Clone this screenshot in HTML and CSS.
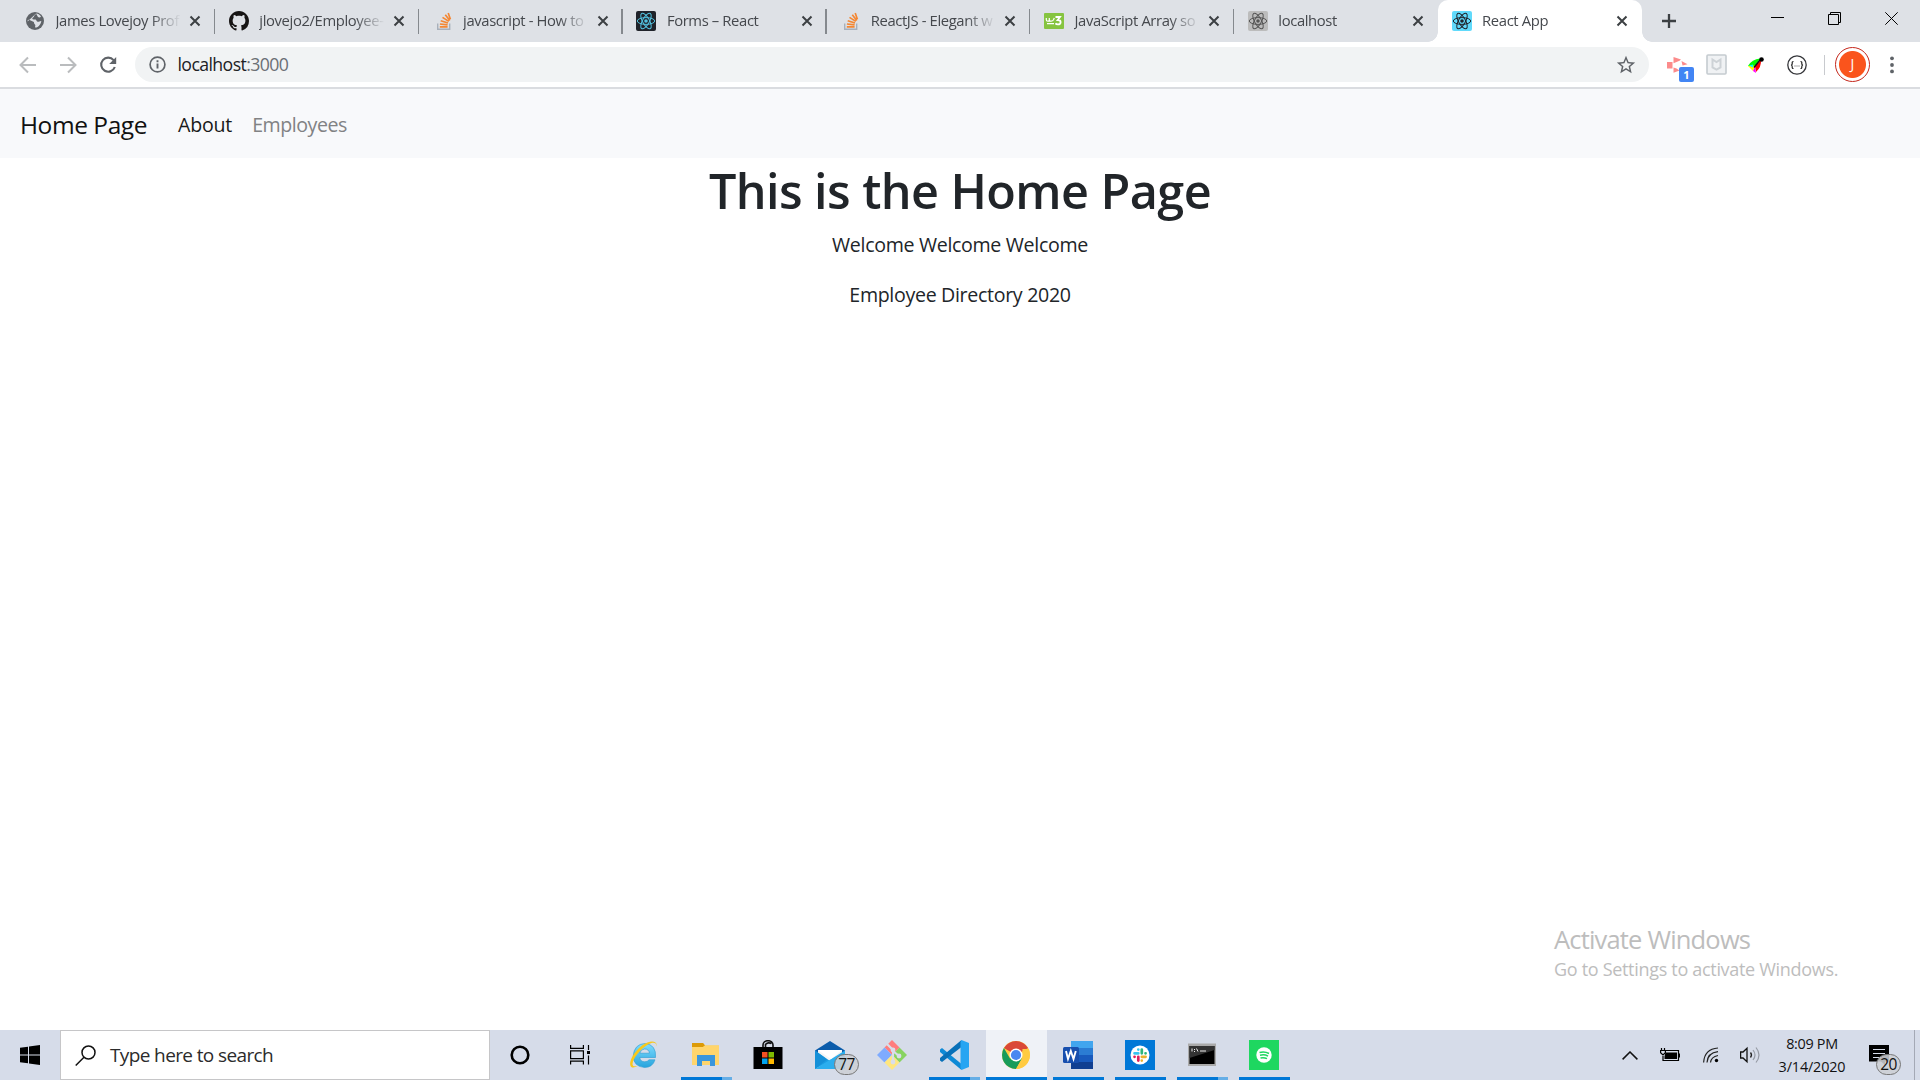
FILE: index.html
```html
<!DOCTYPE html>
<html lang="en">
<head>
<meta charset="utf-8">
<title>React App</title>
<link rel="stylesheet" href="styles.css">
</head>
<body>
<svg class="sprite" aria-hidden="true">
  <symbol id="react" viewBox="0 0 20 20"><circle cx="10" cy="10" r="1.8" fill="currentColor"/><g fill="none" stroke="currentColor" stroke-width="1"><ellipse cx="10" cy="10" rx="8.7" ry="3.4"/><ellipse cx="10" cy="10" rx="8.7" ry="3.4" transform="rotate(60 10 10)"/><ellipse cx="10" cy="10" rx="8.7" ry="3.4" transform="rotate(120 10 10)"/></g></symbol>
  <symbol id="stack" viewBox="0 0 20 20"><path d="M4.700 12.500v5.800h12v-5.800" fill="none" stroke="#a8b0bb" stroke-width="1.400"/><g stroke="#f48733" stroke-width="1.700"><path d="M6.800 15.900h7.800M6.900 13l7.700.9M7.700 9.700l7.300 2.300M9.500 6.400l6.300 4M12.300 3.700l4.500 5.900M15.200 2l2.200 6.200"/></g></symbol>
  <symbol id="x" viewBox="0 0 12 12"><path d="M1.500 1.500l9 9M10.500 1.500l-9 9" stroke="#3c4043" stroke-width="2" fill="none"/></symbol>
</svg>
<header class="tabs">
  <div class="tab"><svg class="fav" viewBox="0 0 20 20"><circle cx="10" cy="10" r="9" fill="#5f6368"/><path d="M11 2.600c-.2 1.800-2 1.500-2 3 0 1-1.800 1-1.700 2.200.1 1 2.500.4 3.300.8 1.200.7.600 2 2 2.200 1.500.2 2.200-1 3.700-.8-.3 3-2.600 6.400-6 6.600-.8-.6.7-2.200-.3-3.200-.9-.8-1-1.600-1.100-2.500L4 8.800C2.700 8.600 2.500 9.500 2.600 10.500M11 2.600c2.500.2 4 1.500 5 3-1 1.500-2.500.8-3 .5z" fill="#dee1e6"/></svg><span class="title">James Lovejoy Prof</span><svg class="close"><use href="#x"/></svg></div>
  <div class="tab"><svg class="fav" viewBox="0 0 16 16"><path fill="#171515" d="M8 0C3.580 0 0 3.580 0 8c0 3.540 2.290 6.530 5.470 7.590.4.070.55-.17.55-.38 0-.19-.01-.82-.01-1.490-2.010.37-2.530-.49-2.690-.94-.09-.23-.48-.94-.82-1.130-.28-.15-.68-.52-.01-.53.63-.01 1.080.58 1.230.82.72 1.210 1.870.87 2.330.66.070-.52.28-.87.51-1.070-1.780-.2-3.640-.89-3.640-3.950 0-.87.31-1.590.82-2.150-.08-.2-.36-1.020.08-2.120 0 0 .67-.21 2.200.82.64-.18 1.320-.27 2-.27s1.360.09 2 .27c1.530-1.040 2.200-.82 2.200-.82.44 1.100.16 1.920.08 2.120.51.56.82 1.270.82 2.150 0 3.070-1.870 3.750-3.650 3.950.29.25.54.73.54 1.480 0 1.070-.01 1.930-.01 2.200 0 .21.15.46.55.38A8.010 8.010 0 0 0 16 8c0-4.420-3.580-8-8-8z"/></svg><span class="title">jlovejo2/Employee-</span><svg class="close"><use href="#x"/></svg></div>
  <div class="tab"><svg class="fav"><use href="#stack"/></svg><span class="title">javascript - How to</span><svg class="close"><use href="#x"/></svg></div>
  <div class="tab"><svg class="fav dark"><use href="#react"/></svg><span class="title">Forms – React</span><svg class="close"><use href="#x"/></svg></div>
  <div class="tab"><svg class="fav"><use href="#stack"/></svg><span class="title">ReactJS - Elegant w</span><svg class="close"><use href="#x"/></svg></div>
  <div class="tab"><svg class="fav" viewBox="0 0 20 20"><rect y="2" width="20" height="16" rx="1" fill="#86c440"/><path d="M2.300 7v1.700q0 1.500 1.500 1.500t1.500-1.500V7M5.300 8.700q0 1.500 1.700 1.500t2.500-1.500l.8-1.700M3 12.700h7" fill="none" stroke="#fff" stroke-width="1.200"/><path d="M11.500 6h4.500l-2.300 3q2.900 0 2.900 2.200t-2.700 2.200q-1.600 0-2.500-1" fill="none" stroke="#fff" stroke-width="1.800"/></svg><span class="title">JavaScript Array so</span><svg class="close"><use href="#x"/></svg></div>
  <div class="tab"><svg class="fav gray"><use href="#react"/></svg><span class="title">localhost</span><svg class="close"><use href="#x"/></svg></div>
  <div class="tab active"><svg class="fav cyan"><use href="#react"/></svg><span class="title">React App</span><svg class="close"><use href="#x"/></svg></div>
  <svg class="plus" viewBox="0 0 14 14"><path d="M7 0v14M0 7h14" stroke="#3c4043" stroke-width="2.300"/></svg>
  <div class="winctl">
    <svg viewBox="0 0 13 13"><path d="M0 5.500h13" stroke="#000"/></svg>
    <svg viewBox="0 0 13 13"><path d="M.5 2.500h10v10h-10zM2.500 2.500v-2h10v10h-2" fill="none" stroke="#000"/></svg>
    <svg viewBox="0 0 13 13"><path d="M.3.3l12.400 12.400M12.700.3L.3 12.700" stroke="#000"/></svg>
  </div>
</header>
<div class="toolbar">
  <svg class="nav-ic" viewBox="0 0 18 18"><path d="M17 9H2M9 1.500L1.500 9 9 16.500" fill="none" stroke="#babcbe" stroke-width="2"/></svg>
  <svg class="nav-ic" viewBox="0 0 18 18"><path d="M1 9h15M9 1.500L16.500 9 9 16.500" fill="none" stroke="#babcbe" stroke-width="2"/></svg>
  <svg class="nav-ic" viewBox="0 0 18 18"><path d="M14.600 4.200A7 7 0 1 0 15.800 11" fill="none" stroke="#5f6368" stroke-width="2.100"/><path d="M17.200 1v7h-7z" fill="#5f6368"/></svg>
  <div class="omnibox">
    <svg class="info" viewBox="0 0 17 17"><circle cx="8.500" cy="8.500" r="7.400" fill="none" stroke="#5f6368" stroke-width="1.700"/><path d="M8.500 7.500v5M8.500 4.300v1.900" stroke="#5f6368" stroke-width="1.900"/></svg>
    <span class="url">localhost<span class="port">:3000</span></span>
    <svg class="star" viewBox="0 0 24 24"><path fill="#5f6368" d="M22 9.240l-7.190-.62L12 2 9.190 8.630 2 9.240l5.460 4.730L5.820 21 12 17.270 18.180 21l-1.630-7.030L22 9.240zM12 15.400l-3.760 2.270 1-4.280-3.320-2.880 4.380-.38L12 6.100l1.710 4.040 4.380.38-3.320 2.880 1 4.280L12 15.400z"/></svg>
  </div>
  <div class="ext">
    <div class="ext-shot"><svg viewBox="0 0 21 16"><path d="M0 5h5.500v6.500H0zM6.500 0l7.500 2.500-1.500 1.300-6 2.400zM14.500 4l6 3.200-5 1.300zM6.500 10.500l3 1 3 2-6 2.300zM12 12l4-1.500-2 4z" fill="#fc8b8b"/></svg><span class="count">1</span></div>
    <svg class="i21" viewBox="0 0 21 21"><rect x="1" y="1" width="19" height="19" rx="1" fill="#f0f2f4" stroke="#c5cbd0" stroke-width="1.600"/><path d="M6.500 5.500v8l4 2.200 4-2.200v-8l-4 2.500z" fill="none" stroke="#cdd2d6" stroke-width="2"/></svg>
    <svg class="i16" viewBox="0 0 16 16"><path d="M12 1.500Q4 2 0 9l7 1z" fill="#0f0"/><path d="M0 9l7-.5L5 14z" fill="#ff0"/><path d="M1 8.500l4-1v3z" fill="#0ff"/><path d="M13 3q.5 7-5 12l-1-5.500z" fill="#f00"/><path d="M7 9.500L5 14l3 2z" fill="#f0f"/><path d="M6 10.500l6-7.500" stroke="#111" stroke-width="1.500"/><circle cx="13.500" cy="2.500" r="2.300" fill="#000"/></svg>
    <svg class="i20" viewBox="0 0 20 20"><circle cx="10" cy="10" r="9.200" fill="none" stroke="#35363a" stroke-width="1.300"/><path d="M6.500 6.500q-1.500 0-1.300 1.700T4 10q1.400.2 1.200 1.800t1.300 1.700M13.500 6.500q1.500 0 1.300 1.700T16 10q-1.400.2-1.200 1.800t-1.300 1.700" fill="none" stroke="#222" stroke-width="1.200"/><path d="M7.500 11h1M9.500 11h1M11.500 11h1" stroke="#555"/></svg>
  </div>
  <div class="divider"></div>
  <div class="avatar">J</div>
  <svg class="menu" viewBox="0 0 4 18"><circle cx="2" cy="2.300" r="1.900" fill="#5f6368"/><circle cx="2" cy="9" r="1.900" fill="#5f6368"/><circle cx="2" cy="15.400" r="1.900" fill="#5f6368"/></svg>
</div>
<main class="page">
  <nav class="navbar"><a class="brand">Home Page</a><a class="link on">About</a><a class="link off">Employees</a></nav>
  <h1>This is the Home Page</h1>
  <p>Welcome Welcome Welcome</p>
  <p>Employee Directory 2020</p>
  <aside class="activate"><div class="act-title">Activate Windows</div><div class="act-sub">Go to Settings to activate Windows.</div></aside>
</main>
<footer class="taskbar">
  <div class="start"><svg viewBox="0 0 20 20"><path d="M0 2.800l8-1.100v7.800H0zM9 1.500L20 0v9.500H9zM0 10.500h8v7.800l-8-1.100zM9 10.500h11V20L9 18.500z"/></svg></div>
  <div class="search"><svg viewBox="0 0 21 21"><circle cx="13.500" cy="7.500" r="6.500" fill="none" stroke="#111" stroke-width="1.500"/><path d="M9 12.200L.7 20.500" stroke="#111" stroke-width="1.500"/></svg><span>Type here to search</span></div>
  <div class="sys"><svg viewBox="0 0 20 20"><circle cx="10" cy="10" r="8.300" fill="none" stroke="#000" stroke-width="2.600"/></svg></div>
  <div class="sys"><svg viewBox="0 0 20 20"><path d="M.6 0v3.400h12.800V0M.6 19.500v-3.400h12.800v3.400M.6 5.900h12.800v7.700H.6zM18.500 0v5M18.500 10.500v9" fill="none" stroke="#000" stroke-width="1.200"/><path d="M17 6h3v3h-3z"/></svg></div>
  <div class="apps">
    <div class="app"><svg viewBox="0 0 30 30"><defs><linearGradient id="ie" x2="0" y2="1"><stop stop-color="#7fdcff"/><stop offset="1" stop-color="#27a4dd"/></linearGradient></defs><path d="M26.500 17.500H10.700q.8 4.300 5 4.300 3 0 4.300-2h6q-2.300 7.700-10.500 7.700-11-.8-11.300-11.500Q5.200 4 16 3.500q11.500 1 10.500 14zM10.800 13.200h9.700q-.7-4.200-4.800-4.200-4 .1-4.900 4.200z" fill="url(#ie)" stroke="#2c9bd0" stroke-width=".6"/><path d="M27.500 6.500C29 .5 21-.3 13 5.500 4 12.500-.5 22.500 1.700 26.200c1.300 2 4.300 1.300 7-.5-3 1.200-5.200.8-5.200-1.700C4 18.500 11 9 19 4.500c5-2.800 8.800-2.500 8.500 2z" fill="#f8c81c"/></svg></div>
    <div class="app run more"><svg viewBox="0 0 30 30"><path d="M1 3h11l2 2.500h14V25H1z" fill="#fcc94d"/><path d="M1 3h11l2 2.500L12 7H1z" fill="#dc9a07"/><path d="M1 7h11l2-1.500h14V25H1z" fill="#ffd56c"/><path d="M6 15h18v11h-5v-5h-8v5H6z" fill="#3a96dc"/></svg></div>
    <div class="app"><svg viewBox="0 0 30 30"><path d="M10 8V5a5 4.300 0 0 1 10 0v3M12.500 8V4.500a4 3.500 0 0 1 6-.8" fill="none" stroke="#111" stroke-width="1.600"/><path d="M.5 7h29v22H.5z"/><path d="M9 12h5.500v5.500H9z" fill="#f25022"/><path d="M15.500 12H21v5.500h-5.500z" fill="#7fba00"/><path d="M9 18.500h5.500V24H9z" fill="#00a4ef"/><path d="M15.500 18.500H21V24h-5.500z" fill="#ffb900"/></svg></div>
    <div class="app"><svg viewBox="0 0 30 30"><path d="M0 10.500L15 1l15 9.500V20H0z" fill="#0b5cab"/><path d="M3 10h24v11H3z" fill="#f5f5f5"/><path d="M0 10.500L15 21 0 29z" fill="#1b9de2"/><path d="M30 10.500V29H0z" fill="#2baeee"/><path d="M0 10.500L12 19.500 0 29z" fill="#1590d8"/><path d="M3 10h24l-11 9z" fill="#fff"/></svg><span class="badge mail-n">77</span></div>
    <div class="app"><svg viewBox="0 0 30 30"><path d="M15 0l7.500 7.500L15 15 7.500 7.500z" fill="#ff7d7d"/><path d="M22.500 7.500L30 15l-7.500 7.500L15 15z" fill="#87d360"/><path d="M7.500 7.500L15 15l-7.500 7.500L0 15z" fill="#7fabff"/><path d="M15 15l7.500 7.500L15 30l-7.500-7.500z" fill="#ffe680"/><path d="M10 4l6 6v12M16 11l6 5" stroke="#d9deea" stroke-width="2.200" fill="none"/><g fill="#d9deea"><circle cx="16" cy="10" r="2.400"/><circle cx="22" cy="16" r="2.400"/><circle cx="16" cy="22" r="2.400"/></g></svg></div>
    <div class="app run more"><svg viewBox="0 0 30 30"><path d="M1 9.500L3 8l19.500 16v6L1 12z" fill="#0e8ad6"/><path d="M1 20.500L3 22 22.500 7V0L1 18z" fill="#0870b8"/><path d="M22.500 0L30 3v24l-7.500 3-1-2.500V2z" fill="#27a5f2"/></svg></div>
    <div class="app run now"><svg viewBox="0 0 28 28"><circle cx="14" cy="14" r="14" fill="#ffcb42"/><path d="M14 14L1.900 7A14 14 0 0 1 26.100 7z" fill="#da4837"/><path d="M1.900 7A14 14 0 0 0 14 28l6-10.500L8 17.500z" fill="#179c5a"/><path d="M14 28l6-10.500L20.500 8h6A14 14 0 0 1 14 28z" fill="#ffcb42"/><circle cx="14" cy="14" r="6.500" fill="#fff"/><circle cx="14" cy="14" r="5.100" fill="#4a88f0"/></svg></div>
    <div class="app run"><svg viewBox="0 0 30 30"><path d="M8 1h22v7H8z" fill="#41a5ee"/><path d="M8 8h22v7H8z" fill="#2b7cd3"/><path d="M8 15h22v7H8z" fill="#185abd"/><path d="M8 22h22v7H8z" fill="#103f91"/><rect x="0" y="7" width="16" height="16" rx="1.500" fill="#174fae"/><path d="M3 11l2 8 2.800-8 2.700 8 2.300-8" fill="none" stroke="#fff" stroke-width="1.900"/></svg></div>
    <div class="app run"><svg viewBox="0 0 30 30"><path d="M0 0h30v30H0z" fill="#0078d7"/><circle cx="15" cy="15" r="9.500" fill="#fff"/><g stroke-width="2.700" stroke-linecap="round"><path d="M9.500 13.300h3.800M13.300 9.500v.1" stroke="#36c5f0"/><path d="M16.800 9.500v3.800M20.500 13.300h.1" stroke="#2eb67d"/><path d="M16.800 16.800h3.800M16.800 20.500v.1" stroke="#ecb22e"/><path d="M13.300 16.800v3.800M9.500 16.800h.1" stroke="#e01e5a"/></g></svg></div>
    <div class="app run more"><svg viewBox="0 0 30 30"><rect x="1" y="3.500" width="28" height="22.500" fill="#aaa"/><path d="M2.500 6h25v18h-25z"/><path d="M2.500 6h25v4L2.500 18z" fill="#333"/><path d="M5 8.500v3M7.500 9v1M7.500 11v1M9.500 8.500l1.500 3M13 11h6" stroke="#eee"/></svg></div>
    <div class="app run"><svg viewBox="0 0 30 30"><path d="M0 0h30v30H0z" fill="#1ed760"/><circle cx="15" cy="15" r="7.700" fill="#fff"/><path d="M10.500 12.500q5-1.500 9.500 1M11 15.300q4.500-1.200 8 .9M11.500 18q3.500-.9 6.500.7" fill="none" stroke="#1ed760" stroke-width="1.500"/></svg></div>
  </div>
  <div class="tray">
    <svg class="chev" viewBox="0 0 16 9"><path d="M.6 8.400L8 1l7.400 7.400" fill="none" stroke="#111" stroke-width="1.500"/></svg>
    <svg class="batt" viewBox="0 0 20 15"><path d="M6 2.500h12.500v10H3V8" fill="none" stroke="#000" stroke-width="1.200"/><path d="M5.500 4.500H17v6.500H4.500V8.500zM19 5.500h1v4h-1z"/><path d="M1.500 0v2M4.500 0v2M.6 2.500h4.800v2.300L3 7 .6 4.800z" fill="none" stroke="#000" stroke-width="1.200"/></svg>
    <svg class="wifi" viewBox="0 0 16 16"><g fill="none" stroke="#222" stroke-width="1.200"><path d="M.6 15.500Q1.500 2 15 1M4 15.500Q4.500 6 15 4.700M7.500 15.500Q8 10 15 8.500"/></g><circle cx="13.500" cy="13.500" r="1.700"/></svg>
    <svg class="vol" viewBox="0 0 20 18"><path d="M.6 6H3l4-3.800v13.600L3 12H.6z" fill="none" stroke="#111" stroke-width="1.300"/><path d="M10.500 6.500q2 2.500 0 5" fill="none" stroke="#222" stroke-width="1.300"/><path d="M13 4q4 5 0 10M16 1.500q6 7.500 0 15" fill="none" stroke="#969ba5" stroke-width="1.200"/></svg>
    <div class="clock"><span class="time">8:09 PM</span><span class="date">3/14/2020</span></div>
    <div class="note"><svg viewBox="0 0 20 20"><path d="M0 0h20v16.500h-4V20l-4-3.500H0z"/><path d="M4 4.500h12M4 8.500h12M4 12.500h8" stroke="#d6dce9" stroke-width="1.200"/></svg><span class="badge note-n">20</span></div>
    <div class="peek"></div>
  </div>
</footer>
</body>
</html>
```
FILE: styles.css
```css
* { box-sizing: border-box; }
body { margin: 0; width: 1920px; height: 1080px; overflow: hidden; display: flex; flex-direction: column; background: #fff; font-family: "Open Sans", "Noto Sans", sans-serif; color: #212529; }
svg { display: block; flex: none; }
.sprite { position: absolute; width: 0; height: 0; }

/* Tab strip */
.tabs { height: 42px; flex: none; display: flex; background: #dee1e6; padding-left: 11px; }
.tab { width: 203.8px; height: 42px; flex: none; display: flex; align-items: center; padding: 0 13.500px 0 14px; position: relative; }
.tab::after { content: ""; position: absolute; right: -0.5px; top: 9px; width: 1.500px; height: 25px; background: #85898e; }
.tab:nth-child(7)::after { display: none; }
.fav { width: 20px; height: 20px; border-radius: 2px; }
.fav.dark { background: #20232a; color: #53c1de; }
.fav.gray { background: #bcbcbc; color: #555; }
.fav.cyan { background: #61dafb; color: #20232a; }
.title { flex: 1; min-width: 0; margin: 0 0 2px 10.500px; font-size: 14.800px; line-height: 20px; letter-spacing: -.37px; color: #45484d; white-space: nowrap; -webkit-mask-image: linear-gradient(90deg, #000 calc(100% - 30px), transparent); mask-image: linear-gradient(90deg, #000 calc(100% - 30px), transparent); }
.close { width: 12px; height: 12px; margin-left: 8px; }
.active { background: #fff; border-radius: 10px 10px 0 0; width: 204px; padding-right: 13.500px; }
.active::before, .active::after { content: ""; position: absolute; top: auto; bottom: 0; width: 10px; height: 10px; }
.active::before { left: -10px; background: radial-gradient(circle at 0 0, transparent 9.500px, #fff 10px); }
.active::after { left: auto; right: -10px; background: radial-gradient(circle at 100% 0, transparent 9.500px, #fff 10px); }
.plus { width: 14px; height: 14px; margin: 14px 0 0 20px; }
.winctl { display: flex; gap: 44px; margin: 12px 22px 0 auto; }
.winctl svg { width: 13px; height: 13px; }

/* Toolbar */
.toolbar { height: 47px; flex: none; display: flex; align-items: center; padding: 0 26px 0 19px; border-bottom: 2px solid #dadce0; }
.nav-ic { width: 18px; height: 18px; margin-right: 22px; }
.omnibox { width: 1514px; height: 35px; margin-left: -4px; border-radius: 18px; background: #f1f3f4; display: flex; align-items: center; padding: 0 12px 0 14px; }
.info { width: 17px; height: 17px; }
.url { margin-left: 11.500px; padding-bottom: 1px; font-size: 17.700px; letter-spacing: -.6px; color: #202124; }
.port { color: #6b6f74; }
.star { width: 22px; height: 22px; margin-left: auto; }
.ext { display: flex; align-items: center; }
.ext-shot { position: relative; margin-left: 17.500px; width: 21px; height: 16px; }
.ext-shot svg { width: 21px; height: 16px; }
.count { position: absolute; left: 12.500px; top: 10px; width: 15px; height: 15px; border-radius: 2px; background: #4285f4; color: #fff; font: bold 11px/15px "Open Sans", sans-serif; text-align: center; }
.i21 { width: 21px; height: 21px; margin-left: 18.500px; }
.i16 { width: 16px; height: 16px; margin-left: 21px; }
.i20 { width: 20px; height: 20px; margin-left: 23px; }
.divider { width: 1px; height: 20px; background: #c8cace; margin-left: 17px; }
.avatar { width: 35px; height: 35px; margin-left: 10px; border-radius: 50%; border: 1.500px solid #c5281c; background: radial-gradient(circle, #fa541c 13px, #fff 14px); color: #fff; font-size: 14px; line-height: 32px; text-align: center; }
.menu { width: 4px; height: 18px; margin-left: auto; }

/* Page */
.page { flex: 1; position: relative; text-align: center; }
.navbar { height: 69px; background: #f8f9fb; display: flex; align-items: center; padding: 2px 20px 0; }
.brand { font-size: 24.500px; letter-spacing: -.45px; color: #111; margin-right: 31px; }
.link { font-size: 19.600px; color: #818284; }
.link.on { color: #191919; letter-spacing: -.2px; margin-right: 20px; }
.link.off { letter-spacing: -.47px; }
h1 { margin: 0 0 8px; font-size: 48.500px; font-weight: 600; line-height: 64px; letter-spacing: -.56px; }
p { margin: 0 0 20px; font-size: 19.600px; line-height: 30px; letter-spacing: -.32px; }
.activate { position: absolute; left: 1554px; top: 833px; text-align: left; color: #bdbdbd; white-space: nowrap; }
.act-title { font-size: 25.500px; line-height: 34px; letter-spacing: -.82px; }
.act-sub { font-size: 18px; line-height: 26px; letter-spacing: -.31px; }

/* Taskbar */
.taskbar { height: 50px; flex: none; display: flex; background: #d6dce9; }
.start { width: 60px; display: flex; align-items: center; justify-content: center; }
.start svg { width: 20px; height: 20px; }
.search { width: 430px; border: 1px solid #c6c6c8; background: #fff; display: flex; align-items: center; padding-left: 14px; font-size: 19px; line-height: 26px; letter-spacing: -.62px; color: #2b2b2b; }
.search span { padding-bottom: 1px; }
.search svg { width: 21px; height: 21px; margin-right: 14px; }
.sys { width: 60px; display: flex; align-items: center; justify-content: center; }
.sys svg { width: 20px; height: 20px; }
.apps { display: flex; margin-left: 3px; }
.app { width: 62px; height: 50px; position: relative; display: flex; align-items: center; justify-content: center; }
.app svg { width: 30px; height: 30px; }
.run::after { content: ""; position: absolute; left: 6px; bottom: 0; width: 51px; height: 3px; background: #0078d7; }
.more::after { background: linear-gradient(90deg, #0078d7 41px, #66aee6 41px); }
.now { background: #eff2f7; width: 61px; margin-left: 1px; padding-right: 2px; }
.now::after { left: 0; width: 61px; }
.app.now svg { width: 28px; height: 28px; }
.badge { position: absolute; width: 25px; height: 21px; border: 1px solid #777; border-radius: 11px; background: rgba(205, 207, 212, .88); color: #111; font: 500 15.500px/19px "Open Sans", sans-serif; letter-spacing: -.6px; text-align: center; }
.mail-n { left: 35px; top: 24px; }
.tray { margin-left: auto; display: flex; align-items: center; width: 298px; }
.chev { width: 16px; height: 9px; }
.batt { width: 20px; height: 15px; margin-left: 22px; }
.wifi { width: 16px; height: 16px; margin-left: 23px; }
.vol { width: 20px; height: 18px; margin-left: 21px; }
.clock { width: 68px; margin-left: 18px; font-size: 14.400px; letter-spacing: -.15px; line-height: 23px; color: #111; display: flex; flex-direction: column; align-items: center; white-space: nowrap; }
.time { letter-spacing: -.3px; }
.note { position: relative; margin-left: 23px; width: 20px; height: 20px; }
.note svg { width: 20px; height: 20px; }
.note-n { left: 7px; top: 9px; }
.peek { width: 1px; height: 50px; background: #a4a9b5; margin-left: 25px; }
```
